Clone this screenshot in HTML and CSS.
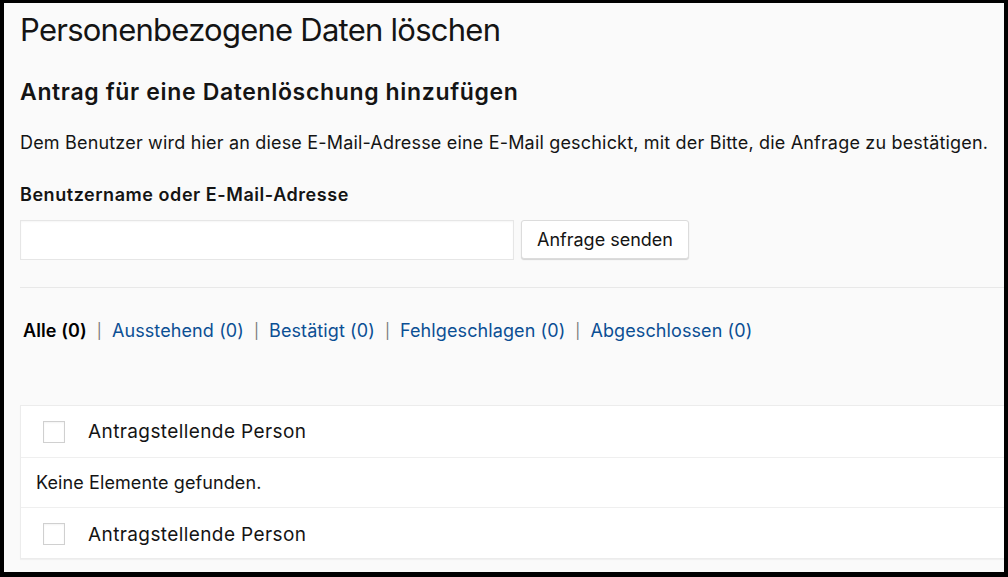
FILE: index.html
```html
<!DOCTYPE html>
<html lang="de">
<head>
<meta charset="utf-8">
<title>Personenbezogene Daten löschen</title>
<link rel="stylesheet" href="styles.css">
</head>
<body>
<div class="screen">
  <h1 class="title">Personenbezogene Daten löschen</h1>
  <h2 class="subtitle">Antrag für eine Datenlöschung hinzufügen</h2>
  <p class="intro">Dem Benutzer wird hier an diese E-Mail-Adresse eine E-Mail geschickt, mit der Bitte, die Anfrage zu bestätigen.</p>
  <label class="field-label" for="user">Benutzername oder E-Mail-Adresse</label>
  <div class="form-row">
    <input class="text-input" id="user" type="text">
    <button class="button" type="button">Anfrage senden</button>
  </div>
  <hr class="divider">
  <ul class="subsubsub">
    <li class="current">Alle (0)</li>
    <li class="sep">|</li>
    <li><a href="#">Ausstehend (0)</a></li>
    <li class="sep">|</li>
    <li><a href="#">Bestätigt (0)</a></li>
    <li class="sep">|</li>
    <li><a href="#">Fehlgeschlagen (0)</a></li>
    <li class="sep">|</li>
    <li><a href="#">Abgeschlossen (0)</a></li>
  </ul>
  <div class="list-table">
    <div class="row head">
      <span class="check"></span>
      <span class="col-title">Antragstellende Person</span>
    </div>
    <div class="row empty">Keine Elemente gefunden.</div>
    <div class="row foot">
      <span class="check"></span>
      <span class="col-title">Antragstellende Person</span>
    </div>
  </div>
</div>
</body>
</html>
```
FILE: styles.css
```css
html, body {
  margin: 0;
  padding: 0;
  background: #000;
  overflow: hidden;
}
body {
  padding: 3px 4px 5px 4px;
  width: 1000px;
  height: 569px;
}
.screen {
  box-sizing: border-box;
  width: 1000px;
  height: 569px;
  background: #fafafa;
  overflow: hidden;
  padding-left: 16px;
  font-family: "Inter", "Liberation Sans", sans-serif;
  color: #141414;
  display: flex;
  flex-direction: column;
  align-items: flex-start;
}
.title {
  margin: 9px 0 0;
  font-size: 31px;
  line-height: 36px;
  font-weight: 400;
  letter-spacing: -0.75px;
}
.subtitle {
  margin: 30px 0 0;
  font-size: 23px;
  line-height: 28px;
  font-weight: 600;
  letter-spacing: 0.65px;
}
.intro {
  margin: 25px 0 0;
  font-size: 18px;
  line-height: 24px;
  letter-spacing: 0.18px;
}
.field-label {
  margin-top: 28px;
  font-size: 18px;
  line-height: 24px;
  font-weight: 600;
  letter-spacing: 0.55px;
}
.form-row {
  margin-top: 13px;
  display: flex;
  gap: 7px;
}
.text-input {
  box-sizing: border-box;
  width: 494px;
  height: 40px;
  margin: 0;
  border: 1px solid #e6e6e6;
  background: #fff;
  box-shadow: inset 0 1px 2px rgba(0,0,0,0.04);
}
.button {
  box-sizing: border-box;
  width: 168px;
  height: 39px;
  margin: 0;
  border: 1px solid #dcdcdc;
  border-radius: 3px;
  background: #fff;
  box-shadow: 0 1px 1px #d4d4d4;
  font-family: inherit;
  font-size: 18px;
  color: #141414;
}
.divider {
  align-self: stretch;
  margin: 27px 0 0;
  border: 0;
  border-top: 1px solid #e8e8e8;
}
.subsubsub {
  list-style: none;
  margin: 31px 0 0 3px;
  padding: 0;
  display: flex;
  gap: 10px;
  font-size: 18px;
  line-height: 24px;
  letter-spacing: 0.1px;
}
.subsubsub .current {
  font-weight: 600;
  color: #000;
}
.subsubsub .sep {
  color: #777;
  font-size: 15px;
}
.subsubsub a {
  color: #0b4f94;
  text-decoration: none;
}
.list-table {
  margin-top: 62px;
  width: 1000px;
  background: #fff;
  border: 1px solid #ececec;
  box-shadow: 0 1px 1px rgba(0,0,0,0.04);
  font-size: 19px;
  letter-spacing: 0.4px;
}
.row {
  box-sizing: border-box;
  display: flex;
  align-items: center;
  height: 50px;
}
.row.head {
  height: 52px;
  border-bottom: 1px solid #efefef;
}
.row.empty {
  height: 50px;
  padding-left: 15px;
  font-size: 18px;
  letter-spacing: 0.1px;
  border-bottom: 1px solid #efefef;
}
.row.foot {
  height: 50px;
  padding-top: 2px;
}
.check {
  box-sizing: border-box;
  width: 22px;
  height: 22px;
  margin-left: 22px;
  border: 1px solid #d0d0d0;
  background: #fff;
  box-shadow: inset 0 1px 2px rgba(0,0,0,0.05);
}
.col-title {
  margin-left: 23px;
}
```
